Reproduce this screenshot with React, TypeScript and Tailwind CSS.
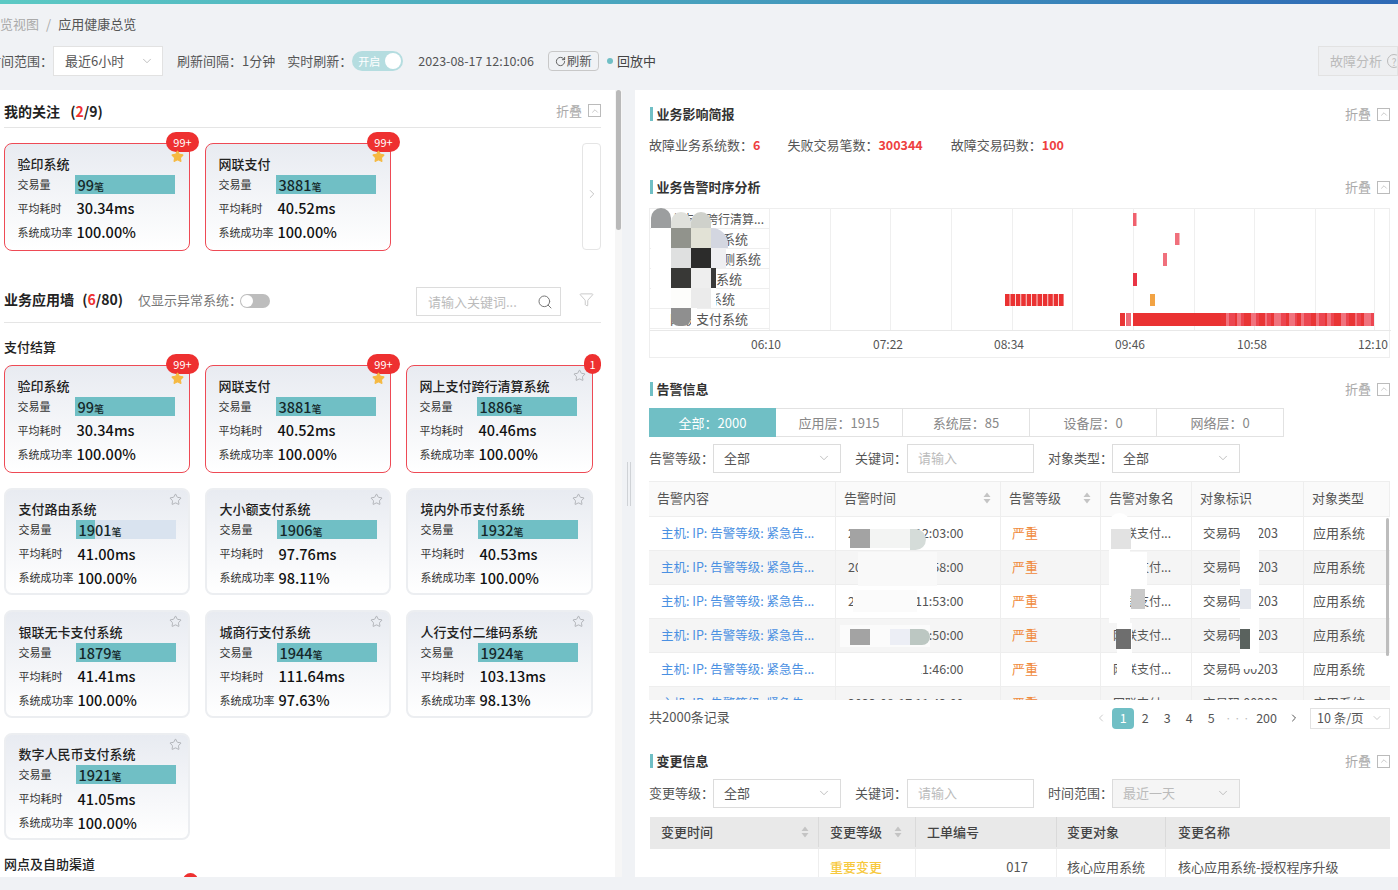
import { ChevronDown, ChevronLeft, ChevronRight, ChevronUp, Funnel, RotateCw, Search, Star } from "lucide-react"
import type { ReactNode } from "react"

const C = "\uFF1A"

type Sys = { name: string; vol: string; fill?: string; avg: string; rate: string; badge?: string; fav?: boolean }

const PAY: Sys[] = [
  { name: "验印系统", vol: "99", avg: "30.34ms", rate: "100.00%", badge: "99+", fav: true },
  { name: "网联支付", vol: "3881", avg: "40.52ms", rate: "100.00%", badge: "99+", fav: true },
  { name: "网上支付跨行清算系统", vol: "1886", avg: "40.46ms", rate: "100.00%", badge: "1" },
  { name: "支付路由系统", vol: "1901", fill: "w-[19%]", avg: "41.00ms", rate: "100.00%" },
  { name: "大小额支付系统", vol: "1906", avg: "97.76ms", rate: "98.11%" },
  { name: "境内外币支付系统", vol: "1932", avg: "40.53ms", rate: "100.00%" },
  { name: "银联无卡支付系统", vol: "1879", avg: "41.41ms", rate: "100.00%" },
  { name: "城商行支付系统", vol: "1944", avg: "111.64ms", rate: "97.63%" },
  { name: "人行支付二维码系统", vol: "1924", avg: "103.13ms", rate: "98.13%" },
  { name: "数字人民币支付系统", vol: "1921", avg: "41.05ms", rate: "100.00%" },
]

function SystemCard({ s }: { s: Sys }) {
  return (
    <div
      className={`relative h-[107.5px] rounded-lg bg-gradient-to-b from-[#e8ebf1] to-white pl-[12.5px] pt-[10.5px] ${s.badge ? "border-[1.5px] border-[#ee4a55]" : "border-2 border-[#eceef1]"}`}
    >
      {s.badge && (
        <span
          className={`absolute top-[-12px] flex h-[20px] items-center justify-center rounded-full bg-[#ee3030] text-[11px] text-white ${s.badge === "1" ? "right-[-9px] w-[17px]" : "right-[-10px] w-[33px]"}`}
        >
          {s.badge}
        </span>
      )}
      {s.fav ? (
        <Star className="absolute right-[5px] top-[6px] size-[13px] fill-[#f5b942] text-[#f5b942]" />
      ) : (
        <Star className="absolute right-[6px] top-[3px] size-[13px] text-[#a5a8ad]" strokeWidth={1.5} />
      )}
      <div className="text-[13px] font-medium leading-[18px] text-[#222]">{s.name}</div>
      <div className="mt-[2px] flex h-[19px] items-center">
        <span className="w-[57px] text-[11px] text-[#333]">交易量</span>
        <div className="relative h-[19px] w-[100px] bg-[#d9e3ef]">
          <div className={`h-full bg-[#70bfc5] ${s.fill ?? "w-full"}`} />
          <span className="absolute left-[3px] top-0 text-[14.5px] font-medium leading-[19px] text-[#15282a]">
            {s.vol}
            <span className="text-[10px]">笔</span>
          </span>
        </div>
      </div>
      <div className="mt-[5px] flex h-[19px] items-center">
        <span className="w-[59px] text-[11px] text-[#333]">平均耗时</span>
        <span className="text-[14.5px] font-medium text-[#111]">{s.avg}</span>
      </div>
      <div className="mt-[5px] flex h-[19px] items-center">
        <span className="w-[59px] whitespace-nowrap text-[11px] text-[#333]">系统成功率</span>
        <span className="text-[14.5px] font-medium text-[#111]">{s.rate}</span>
      </div>
    </div>
  )
}

function Collapse() {
  return (
    <div className="flex items-center gap-[6px] text-[13px] text-[#aaaaaa]">
      折叠
      <span className="flex size-[13px] items-center justify-center border border-[#bbb]">
        <ChevronUp className="size-[10px]" strokeWidth={1.5} />
      </span>
    </div>
  )
}

function SectionTitle({ title, className = "" }: { title: string; className?: string }) {
  return (
    <div className={`flex h-[20px] items-center justify-between ${className}`}>
      <div className="flex items-center gap-[4px] text-[13px] font-bold text-[#333]">
        <span className="ml-[1px] h-[14px] w-[2.5px] bg-[#70bfc5]" />
        {title}
      </div>
      <Collapse />
    </div>
  )
}

function Field({ label, value, ph, disabled }: { label: string; value?: string; ph?: string; disabled?: boolean }) {
  return (
    <div className="flex items-center">
      <span className="pb-[1px] text-[13px] text-[#555]">{label}{C}</span>
      {ph ? (
        <div className="flex h-[29px] w-[127px] items-center border border-[#dcdcdc] pb-[1px] pl-[10px] text-[13px] text-[#bbb]">
          {ph}
        </div>
      ) : (
        <div
          className={`ml-[-1px] flex h-[29px] w-[128px] items-center justify-between border border-[#dcdcdc] pb-[1px] pl-[10px] pr-[9px] text-[13px] ${disabled ? "bg-[#f5f5f5] text-[#bbb]" : "text-[#555]"}`}
        >
          {value}
          <ChevronDown className="size-[14px] text-[#aaa]" strokeWidth={1.25} />
        </div>
      )}
    </div>
  )
}

function Sort() {
  return (
    <svg width="8" height="12" viewBox="0 0 8 12" className="shrink-0">
      <path d="M4 0.5 L7.5 5 H0.5 Z M4 11.5 L7.5 7 H0.5 Z" fill="#c4c4c4" />
    </svg>
  )
}

const CHART_LABELS = [
  { text: "网上支付跨行清算...", cls: "pl-[8px] text-[12px]" },
  { text: "支付路由系统", cls: "pl-[20px]" },
  { text: "业务监测系统", cls: "pl-[33px]" },
  { text: "大小额系统", cls: "pl-[27px]" },
  { text: "城商行系统", cls: "pl-[20px]" },
  { text: "网联支付系统", cls: "pl-[20px]" },
]

function makeLongBar() {
  const out: { x: number; w: number; c: string }[] = [
    { x: 1119, w: 5, c: "#e93535" },
    { x: 1125, w: 5, c: "#ef6a76" },
    { x: 1132, w: 88, c: "#ea3232" },
  ]
  let x = 1220
  let i = 0
  while (x < 1373) {
    const w = Math.min([5, 3, 6, 2, 4, 3, 7][i % 7], 1373 - x)
    out.push({ x, w, c: i % 3 === 1 ? "#f0737e" : i % 3 === 2 ? "#ec4650" : "#e93535" })
    x += w
    i++
  }
  return out
}

function Chart() {
  const gx = [829, 889, 950, 1011, 1071, 1132, 1193, 1253, 1314, 1373]
  const ticks = [
    ["06:10", 765],
    ["07:22", 887],
    ["08:34", 1008],
    ["09:46", 1129],
    ["10:58", 1251],
    ["12:10", 1372],
  ] as const
  const redRun = Array.from({ length: 11 }, (_, i) => 1004 + i * 5.4)
  return (
    <svg width="622" height="150" viewBox="768 208 622 150" className="absolute left-[119px] top-[-1px] overflow-visible">
      {gx.map((x) => (
        <line key={x} x1={x + 0.5} x2={x + 0.5} y1={208} y2={330} stroke="#efefef" />
      ))}
      <line x1={768.5} x2={768.5} y1={208} y2={330} stroke="#efefef" />
      <line x1={649} x2={1390} y1={330.5} y2={330.5} stroke="#e8e8e8" />
      <rect x={1132} y={213} width={3.5} height={13} fill="#f0616e" />
      <rect x={1174} y={233} width={4.5} height={12} fill="#f0707c" />
      <rect x={1162} y={253} width={4} height={13} fill="#f0707c" />
      <rect x={1132} y={273} width={4} height={13} fill="#e93545" />
      {redRun.map((x) => (
        <rect key={x} x={x} y={294} width={4.6} height={12} fill="#ea3232" />
      ))}
      <rect x={1149} y={294} width={5} height={12} fill="#f2a344" />
      {makeLongBar().map((b) => (
        <rect key={b.x} x={b.x} y={313} width={b.w} height={13} fill={b.c} />
      ))}
      {ticks.map(([t, x]) => (
        <text key={t} x={x} y={349} textAnchor="middle" fontSize="12" fill="#555">
          {t}
        </text>
      ))}
    </svg>
  )
}

function Patch({ className }: { className: string }) {
  return <div className={`absolute ${className}`} />
}

const ROWS = ["12:03:00", "11:58:00", "11:53:00", "11:50:00", "11:46:00", "11:42:00"]
const COLS = "grid grid-cols-[187px_165px_100px_91px_112px_86px]"

function Cell({ children, className = "" }: { children: ReactNode; className?: string }) {
  return <div className={`flex items-center border-r border-[#eeeeee] pb-[1px] ${className}`}>{children}</div>
}

function Head({ children, sort, className = "" }: { children: ReactNode; sort?: boolean; className?: string }) {
  return (
    <div className={`flex items-center justify-between border-r border-[#eeeeee] pb-[2px] pl-[8px] pr-[9px] ${className}`}>
      {children}
      {sort && <Sort />}
    </div>
  )
}

export default function App() {
  return (
    <div className="flex h-[890px] w-[1398px] flex-col overflow-hidden bg-[#f0f2f5] font-['Noto_Sans_CJK_SC','Noto_Sans',sans-serif] text-[#555]">
      <div className="h-[4px] shrink-0 bg-gradient-to-r from-[#5cc9c4] via-[#47a0bd] to-[#2f69b5]" />
      <div className="flex h-[42px] shrink-0 items-center pb-[3px] text-[13px]">
        <span className="ml-[-13px] text-[#aaa]">概览视图</span>
        <span className="mx-[7px] text-[#aaa]">/</span>
        <span className="text-[#555]">应用健康总览</span>
      </div>
      <div className="flex h-[30px] shrink-0 items-center text-[13px]">
        <span className="ml-[-12px]">时间范围{C}</span>
        <div className="flex h-[30px] w-[110px] items-center justify-between border border-[#e2e2e2] bg-white pl-[11px] pr-[8px]">
          最近6小时
          <ChevronDown className="size-[14px] text-[#aaa]" strokeWidth={1.25} />
        </div>
        <span className="ml-[14px]">刷新间隔{C}1分钟</span>
        <span className="ml-[12px]">实时刷新{C}</span>
        <div className="flex h-[20px] w-[51px] items-center justify-between rounded-full bg-[#b5dde0] pl-[6px] pr-[2px] text-[11px] text-white">
          开启
          <span className="size-[16px] rounded-full bg-white" />
        </div>
        <span className="ml-[15px] text-[12.5px]">2023-08-17 12:10:06</span>
        <div className="ml-[14px] flex h-[20px] w-[51px] items-center justify-center gap-[1px] rounded-sm border border-[#c8c8c8] bg-[#f0f2f5] text-[12.5px]">
          <RotateCw className="size-[11px]" />
          刷新
        </div>
        <span className="ml-[8px] size-[6px] rounded-full bg-[#70bfc5]" />
        <span className="ml-[4px] text-[#444]">回放中</span>
        <div className="ml-auto flex h-[30px] w-[80px] shrink-0 items-center gap-[5px] overflow-hidden whitespace-nowrap border border-[#e2e2e2] bg-[#eeeff1] pl-[11px] text-[13px] text-[#bbb]">
          故障分析
          <span className="flex size-[14px] shrink-0 items-center justify-center rounded-full border border-[#bbb] text-[10px]">?</span>
        </div>
      </div>
      <div className="mt-[14px] flex h-[787px] shrink-0">
        {/* left */}
        <div className="relative h-full w-[622px] overflow-hidden bg-white">
          <div className="absolute right-0 top-0 h-full w-[7px] bg-[#f6f6f6]">
            <div className="ml-[1px] h-[140px] w-[5px] rounded bg-[#b9b9b9]" />
          </div>
          <div className="w-[601px] pl-[4px] pt-[11px]">
            <div className="flex h-[27px] items-start justify-between border-b border-[#e5e5e5] pb-[5px]">
              <div className="text-[14px] font-bold text-[#222]">
                我的关注 <span className="ml-[7px]">(<span className="text-[#ee3030]">2</span>/9)</span>
              </div>
              <Collapse />
            </div>
            <div className="mt-[15px] flex h-[107px] gap-[15px]">
              <div className="w-[186px]"><SystemCard s={PAY[0]} /></div>
              <div className="w-[186px]"><SystemCard s={PAY[1]} /></div>
              <div className="ml-auto flex w-[19px] items-center justify-center rounded border border-[#e5e5e5] pb-[5px]">
                <ChevronRight className="size-[14px] text-[#bbb]" strokeWidth={1.5} />
              </div>
            </div>
            <div className="mt-[37px] flex h-[36px] items-start border-b border-[#e5e5e5]">
              <div className="mt-[2px] text-[14px] font-bold text-[#222]">
                业务应用墙 <span className="ml-[5px]">(<span className="text-[#ee3030]">6</span>/80)</span>
              </div>
              <span className="ml-[15px] mt-[3px] text-[13px] text-[#777]">仅显示异常系统{C}</span>
              <div className="ml-[-2px] mt-[7px] flex h-[14px] w-[30px] items-center rounded-full bg-[#bdbdbd] pl-[1px]">
                <span className="size-[12px] rounded-full bg-white" />
              </div>
              <div className="ml-auto flex h-[29px] w-[145px] items-center justify-between border border-[#dcdcdc] pl-[11px] pr-[7px] text-[13px] text-[#bbb]">
                请输入关键词...
                <Search className="size-[16px] text-[#777]" strokeWidth={1.5} />
              </div>
              <Funnel className="ml-[18px] mr-[7px] mt-[5px] size-[15px] text-[#bbb]" strokeWidth={1.25} />
            </div>
            <div className="mt-[14px] flex h-[20px] items-center text-[13px] font-medium text-[#222]">支付结算</div>
            <div className="mt-[8px] grid grid-cols-[186px_186px_187px] gap-x-[15px] gap-y-[15px]">
              {PAY.map((s) => (
                <SystemCard key={s.name} s={s} />
              ))}
            </div>
            <div className="mt-[14px] flex h-[20px] items-center text-[13px] font-medium text-[#222]">网点及自助渠道</div>
            <div className="relative">
              <span className="absolute left-[179px] top-[-1px] h-[20px] w-[15px] rounded-full bg-[#ee3030]" />
            </div>
          </div>
        </div>
        {/* splitter */}
        <div className="flex w-[13px] items-center justify-center gap-[2px]">
          <span className="h-[44px] w-px bg-[#cfd2d6]" />
          <span className="h-[44px] w-px bg-[#cfd2d6]" />
        </div>
        {/* right */}
        <div className="h-full w-[763px] overflow-hidden bg-white pl-[14px] pr-[8px] pt-[14px]">
          <SectionTitle title="业务影响简报" />
          <div className="mt-[11px] flex h-[20px] items-center text-[13px]">
            故障业务系统数{C}<span className="text-[12.5px] font-bold text-[#ee4040]">6</span>
            <span className="ml-[27px]">失败交易笔数{C}</span><span className="text-[12.5px] font-bold text-[#ee4040]">300344</span>
            <span className="ml-[28px]">故障交易码数{C}</span><span className="text-[12.5px] font-bold text-[#ee4040]">100</span>
          </div>
          <SectionTitle title="业务告警时序分析" className="mt-[22px]" />
          <div className="relative mt-[11px] h-[150px] border border-[#eeeeee]">
            <div className="w-[119px] text-[13px] text-[#555]">
              {CHART_LABELS.map((l) => (
                <div key={l.text} className={`flex h-[20px] items-center overflow-hidden whitespace-nowrap border-b border-[#eeeeee] ${l.cls}`}>
                  {l.text}
                </div>
              ))}
            </div>
            <Chart />
            <Patch className="left-[1px] top-[-1px] h-[20px] w-[20px] rounded-t-full bg-[#9c9e9f]" />
            <Patch className="left-[21px] top-[3px] h-[16px] w-[20px] rounded-t-full bg-[#e0e1dc]" />
            <Patch className="left-[41px] top-[3px] h-[16px] w-[20px] rounded-t-full bg-[#cfd1cb]" />
            <Patch className="left-[21px] top-[19px] h-[20px] w-[20px] bg-[#91938c]" />
            <Patch className="left-[41px] top-[19px] h-[20px] w-[20px] bg-[#e2e2d6]" />
            <Patch className="left-[61px] top-[19px] h-[20px] w-[17px] rounded-tr-2xl bg-[#d3d6e0]" />
            <Patch className="left-[21px] top-[39px] h-[20px] w-[20px] bg-[#dfe0e0]" />
            <Patch className="left-[41px] top-[39px] h-[20px] w-[20px] bg-[#2c2c2b]" />
            <Patch className="left-[61px] top-[39px] h-[20px] w-[15px] bg-[#efeff2]" />
            <Patch className="left-[21px] top-[59px] h-[20px] w-[20px] bg-[#383836]" />
            <Patch className="left-[41px] top-[59px] h-[20px] w-[20px] bg-[#eeeeee]" />
            <Patch className="left-[61px] top-[59px] h-[20px] w-[5px] bg-[#3a3a3a]" />
            <Patch className="left-[1px] top-[19px] h-[80px] w-[20px] bg-white" />
            <Patch className="left-[21px] top-[79px] h-[20px] w-[20px] bg-[#fdfdfb]" />
            <Patch className="left-[41px] top-[79px] h-[20px] w-[20px] bg-[#ebebeb]" />
            <Patch className="left-[61px] top-[79px] h-[20px] w-[5px] bg-white" />
            <Patch className="left-[21px] top-[99px] h-[18px] w-[20px] rounded-b-lg bg-[#8f8f8f]" />
            <Patch className="left-[41px] top-[99px] h-[18px] w-[6px] bg-white" />
          </div>
          <SectionTitle title="告警信息" className="mt-[21px]" />
          <div className="mt-[9px] flex h-[29px] w-[635px] text-[13px]">
            <div className="flex w-[127px] items-center justify-center bg-[#70bfc5] text-white">全部{C}2000</div>
            {[`应用层${C}1915`, `系统层${C}85`, `设备层${C}0`, `网络层${C}0`].map((t) => (
              <div key={t} className="flex w-[127px] items-center justify-center border border-l-0 border-[#e2e2e2] text-[#888]">
                {t}
              </div>
            ))}
          </div>
          <div className="mt-[7px] flex h-[29px] gap-[14px]">
            <Field label="告警等级" value="全部" />
            <Field label="关键词" ph="请输入" />
            <Field label="对象类型" value="全部" />
          </div>
          <div className="relative mt-[8px] h-[219px] overflow-hidden border-t border-[#eeeeee] text-[13px]">
            <div className={`${COLS} h-[35px] border-b border-[#eeeeee] bg-[#fafafa] text-[13px] text-[#555]`}>
              <Head>告警内容</Head>
              <Head sort>告警时间</Head>
              <Head sort>告警等级</Head>
              <Head>告警对象名</Head>
              <Head>对象标识</Head>
              <Head>对象类型</Head>
            </div>
            {ROWS.map((t, i) => (
              <div key={t} className={`${COLS} h-[34px] border-b border-[#eeeeee] ${i % 2 ? "bg-[#f5f5f5]" : "bg-white"}`}>
                <Cell className="pl-[12px] text-[12.5px] text-[#4a90e2]">主机: IP: 告警等级: 紧急告...</Cell>
                <Cell className="pl-[12px] text-[12.5px]">2023-08-17 {t}</Cell>
                <Cell className="pl-[11px] text-[#f08a3c]">严重</Cell>
                <Cell className="pl-[12px] text-[12px]">网联支付...</Cell>
                <Cell className="pl-[11px] text-[12.5px]">交易码 00203</Cell>
                <Cell className="border-r-0 pl-[9px]">应用系统</Cell>
              </div>
            ))}
            <Patch className="left-[201px] top-[47px] h-[19px] w-[20px] bg-[#a3a3a3]" />
            <Patch className="left-[221px] top-[47px] h-[19px] w-[40px] bg-[#f3f4f3]" />
            <Patch className="left-[261px] top-[47px] h-[21px] w-[16px] rounded-r-full bg-[#d5dcd9]" />
            <Patch className="left-[209px] top-[70px] h-[34px] w-[79px] bg-[#f9f9f9]" />
            <Patch className="left-[204px] top-[108px] h-[22px] w-[64px] bg-[#fbfbfb]" />
            <Patch className="left-[191px] top-[143px] h-[22px] w-[90px] bg-[#fbfbfb]" />
            <Patch className="left-[201px] top-[147px] h-[16px] w-[20px] bg-[#a3a3a3]" />
            <Patch className="left-[241px] top-[147px] h-[16px] w-[20px] bg-[#eceef5]" />
            <Patch className="left-[261px] top-[147px] h-[16px] w-[20px] rounded-r-full bg-[#bcc7c2]" />
            <Patch className="left-[194px] top-[177px] h-[16px] w-[78px] bg-white" />
            <Patch className="left-[460px] top-[31px] h-[110px] w-[21px] rounded-t-full bg-white" />
            <Patch className="left-[481px] top-[70px] h-[34px] w-[17px] bg-white" />
            <Patch className="left-[468px] top-[141px] h-[53px] w-[15px] bg-white" />
            <Patch className="left-[462px] top-[47px] h-[20px] w-[20px] bg-[#e2e2e2]" />
            <Patch className="left-[482px] top-[107px] h-[20px] w-[14px] bg-[#c9c9c9]" />
            <Patch className="left-[467px] top-[147px] h-[20px] w-[15px] bg-[#6e6e6e]" />
            <Patch className="left-[591px] top-[41px] h-[146px] w-[19px] rounded-t-full bg-white" />
            <Patch className="left-[591px] top-[107px] h-[20px] w-[11px] bg-[#e5e8ee]" />
            <Patch className="left-[591px] top-[147px] h-[20px] w-[10px] bg-[#5a625e]" />
            <Patch className="right-[1px] top-[36px] h-[138px] w-[3px] rounded bg-[#bdbdbd]" />
          </div>
          <div className="mt-[7px] flex h-[22px] items-center text-[13px]">
            <span className="mt-[-2px]">共2000条记录</span>
            <div className="ml-auto flex items-center text-[12.5px]">
              <ChevronLeft className="mr-[5px] size-[12px] text-[#ccc]" />
              <span className="flex h-[21px] w-[22px] items-center justify-center rounded-sm bg-[#70bfc5] text-white">1</span>
              {["2", "3", "4", "5"].map((p) => (
                <span key={p} className="flex w-[22px] justify-center">{p}</span>
              ))}
              <span className="flex w-[32px] justify-center text-[7px] tracking-[2px] text-[#bbb]">•••</span>
              <span className="ml-[2px]">200</span>
              <ChevronRight className="ml-[11px] mr-[10px] size-[12px] text-[#555]" />
              <div className="flex h-[21px] w-[80px] items-center justify-between border border-[#e2e2e2] pl-[6px] pr-[6px]">
                10 条/页
                <ChevronDown className="size-[12px] text-[#aaa]" strokeWidth={1.25} />
              </div>
            </div>
          </div>
          <SectionTitle title="变更信息" className="mt-[22px]" />
          <div className="mt-[8px] flex h-[29px] gap-[14px]">
            <Field label="变更等级" value="全部" />
            <Field label="关键词" ph="请输入" />
            <Field label="时间范围" value="最近一天" disabled />
          </div>
          <div className="relative ml-[1px] mt-[9px] text-[13px]">
            <div className="grid h-[32px] grid-cols-[169px_97px_141px_109px_224px] bg-[#e9e9e9] pb-[2px] text-[13px] font-medium text-[#444]">
              <div className="flex items-center justify-between border-r border-[#dadada] pl-[11px] pr-[9px]">变更时间<Sort /></div>
              <div className="flex items-center justify-between border-r border-[#dadada] pl-[11px] pr-[13px]">变更等级<Sort /></div>
              <div className="flex items-center border-r border-[#dadada] pl-[11px]">工单编号</div>
              <div className="flex items-center border-r border-[#dadada] pl-[10px]">变更对象</div>
              <div className="flex items-center pl-[12px]">变更名称</div>
            </div>
            <div className="grid h-[36px] grid-cols-[169px_97px_141px_109px_224px] border-b border-[#eeeeee]">
              <div className="flex items-center border-r border-[#eeeeee] pl-[11px]" />
              <div className="flex items-center border-r border-[#eeeeee] pl-[11px] font-medium text-[#f7c93e]">重要变更</div>
              <div className="flex items-center justify-end border-r border-[#eeeeee] pr-[28px]">017</div>
              <div className="flex items-center border-r border-[#eeeeee] pl-[10px]">核心应用系统</div>
              <div className="flex items-center pl-[12px]">核心应用系统-授权程序升级</div>
            </div>
          </div>
        </div>
      </div>
    </div>
  )
}
